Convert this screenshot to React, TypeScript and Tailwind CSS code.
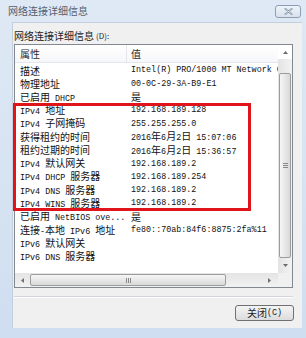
import React from "react";

const rows: [string, string][] = [
  ["描述", "Intel(R) PRO/1000 MT Network Connection"],
  ["物理地址", "00-0C-29-3A-B9-E1"],
  ["已启用 DHCP", "是"],
  ["IPv4 地址", "192.168.189.128"],
  ["IPv4 子网掩码", "255.255.255.0"],
  ["获得租约的时间", "2016年6月2日 15:07:06"],
  ["租约过期的时间", "2016年6月2日 15:36:57"],
  ["IPv4 默认网关", "192.168.189.2"],
  ["IPv4 DHCP 服务器", "192.168.189.254"],
  ["IPv4 DNS 服务器", "192.168.189.2"],
  ["IPv4 WINS 服务器", "192.168.189.2"],
  ["已启用 NetBIOS ove...", "是"],
  ["连接-本地 IPv6 地址", "fe80::70ab:84f6:8875:2fa%11"],
  ["IPv6 默认网关", ""],
  ["IPv6 DNS 服务器", ""],
];

// SimSun-ish mix: narrow latin, full-width CJK
function T({ s }: { s: string }) {
  const parts = s.split(/([\u3000-\u303f\u4e00-\u9fff\uff00-\uffef]+)/);
  return (
    <>
      {parts.map((p, i) =>
        i % 2 === 1 ? (
          <span key={i} className="font-['Noto_Sans_CJK_SC',sans-serif] text-[10px] leading-none">
            {p}
          </span>
        ) : (
          <span key={i} className="font-['Liberation_Mono',monospace] text-[8.4px] leading-none whitespace-pre">
            {p}
          </span>
        )
      )}
    </>
  );
}

function Tri({ dir }: { dir: "up" | "down" | "left" | "right" }) {
  const pts = {
    up: "0,4 3.5,0 7,4",
    down: "0,0 3.5,4 7,0",
    left: "4,0 0,3.5 4,7",
    right: "0,0 4,3.5 0,7",
  }[dir];
  const vb = dir === "up" || dir === "down" ? "0 0 7 4" : "0 0 4 7";
  const cls = dir === "up" || dir === "down" ? "w-[5px] h-[3px]" : "w-[3px] h-[5px]";
  return (
    <svg viewBox={vb} className={cls}>
      <polygon points={pts} fill="#6b6b6b" />
    </svg>
  );
}

export default function App() {
  return (
    <div className="relative w-[306px] h-[338px] overflow-hidden bg-gradient-to-b from-[#dfe9f5] to-[#cfdef0] flex flex-col">
      {/* Title bar */}
      <div className="h-[22px] flex items-center justify-between pl-[8px] pr-[5px]">
        <span className="font-['Noto_Sans_CJK_SC',sans-serif] text-[10px] text-[#56606c] leading-none">
          网络连接详细信息
        </span>
        <div className="w-[26px] h-[13px] rounded-[3px] border border-[#8d9db2] bg-gradient-to-b from-[#eef3f9] to-[#d8e2ee] flex items-center justify-center">
          <svg viewBox="0 0 10 8" className="w-[9px] h-[7px]">
            <path d="M1.5 1 L8.5 7 M8.5 1 L1.5 7" stroke="#7f8da0" strokeWidth="2.2" strokeLinecap="round" />
            <path d="M1.5 1 L8.5 7 M8.5 1 L1.5 7" stroke="#eef2f7" strokeWidth="0.8" strokeLinecap="round" />
          </svg>
        </div>
      </div>

      {/* Client panel */}
      <div className="ml-[12px] w-[290px] h-[306px] bg-[#f0f0f0] border-l border-t border-[#c3cfdc] pl-[1px] flex flex-col">
        <div className="h-[20px] pt-[6px] flex items-center text-[#222]">
          <span className="font-['Noto_Sans_CJK_SC',sans-serif] text-[10px] leading-none">网络连接详细信息</span>
          <span className="font-['Noto_Sans_CJK_SC',sans-serif] text-[8px] leading-none ml-[2px]">(D):</span>
        </div>

        {/* List view */}
        <div className="mt-[1px] w-[279px] h-[244px] border border-[#828790] bg-white flex">
          <div className="w-[263px] flex flex-col">
            {/* header */}
            <div className="h-[18px] flex border-b border-[#e3e6ea] bg-gradient-to-b from-white to-[#f6f7f9] text-[#1e2a38]">
              <div className="w-[112px] border-r border-[#e3e6ea] pl-[5px] flex items-center">
                <span className="font-['Noto_Sans_CJK_SC',sans-serif] text-[10px] leading-none">属性</span>
              </div>
              <div className="pl-[4px] flex items-center">
                <span className="font-['Noto_Sans_CJK_SC',sans-serif] text-[10px] leading-none">值</span>
              </div>
            </div>
            {/* rows */}
            <div className="flex-1 pt-[1px] overflow-hidden text-[#111]">
              {rows.map(([k, v], i) => (
                <div key={i} className="h-[13.3px] flex items-center whitespace-nowrap">
                  <div className="w-[116px] pl-[5px] shrink-0 flex items-baseline">
                    <T s={k} />
                  </div>
                  <div className="flex items-baseline">
                    <T s={v} />
                  </div>
                </div>
              ))}
            </div>
            {/* horizontal scrollbar */}
            <div className="h-[14px] bg-gradient-to-b from-[#e4e4e4] to-[#f2f2f2] flex items-center">
              <div className="w-[15px] flex justify-center">
                <Tri dir="left" />
              </div>
              <div className="w-[196px] h-[12px] rounded-[2px] border border-[#9c9c9c] bg-gradient-to-b from-[#f6f6f6] to-[#d9d9d9] flex items-center justify-center">
                <div className="flex gap-[1px]">
                  <div className="w-[1px] h-[5px] bg-[#888]" />
                  <div className="w-[1px] h-[5px] bg-[#888]" />
                  <div className="w-[1px] h-[5px] bg-[#888]" />
                </div>
              </div>
              <div className="flex-1 flex justify-end pr-[7px]">
                <Tri dir="right" />
              </div>
            </div>
          </div>
          {/* vertical scrollbar */}
          <div className="w-[14px] flex flex-col bg-gradient-to-r from-[#e4e4e4] to-[#f2f2f2]">
            <div className="h-[14px] flex items-center justify-center bg-white">
              <Tri dir="up" />
            </div>
            <div className="h-[14px]" />
            <div className="mx-[1px] h-[185px] rounded-[2px] border border-[#9c9c9c] bg-gradient-to-r from-[#f6f6f6] to-[#d9d9d9] flex items-center justify-center">
              <div className="flex flex-col gap-[1px]">
                <div className="w-[5px] h-[1px] bg-[#888]" />
                <div className="w-[5px] h-[1px] bg-[#888]" />
                <div className="w-[5px] h-[1px] bg-[#888]" />
              </div>
            </div>
            <div className="h-[15px] flex items-center justify-center">
              <Tri dir="down" />
            </div>
            <div className="flex-1 bg-[#f0f0f0]" />
          </div>
        </div>

        {/* separator */}
        <div className="mt-[8px] w-[279px] h-[1px] bg-[#d2d6dc]" />
        <div className="w-[279px] h-[1px] bg-white" />

        {/* button */}
        <div className="mt-[7px] w-[280px] flex justify-end">
          <div className="w-[59px] h-[16px] rounded-[3px] border border-[#707070] bg-gradient-to-b from-[#f4f4f4] to-[#dcdcdc] flex items-center justify-center text-[#222]">
            <span className="font-['Noto_Sans_CJK_SC',sans-serif] text-[10px] leading-none">关闭</span>
            <span className="font-['Liberation_Mono',monospace] text-[8.4px] leading-none">(C)</span>
          </div>
        </div>
      </div>

      {/* red annotation box */}
      <div className="absolute left-[13px] top-[103px] w-[238px] h-[108px] border-[3px] border-[#e0141b]" />
    </div>
  );
}
